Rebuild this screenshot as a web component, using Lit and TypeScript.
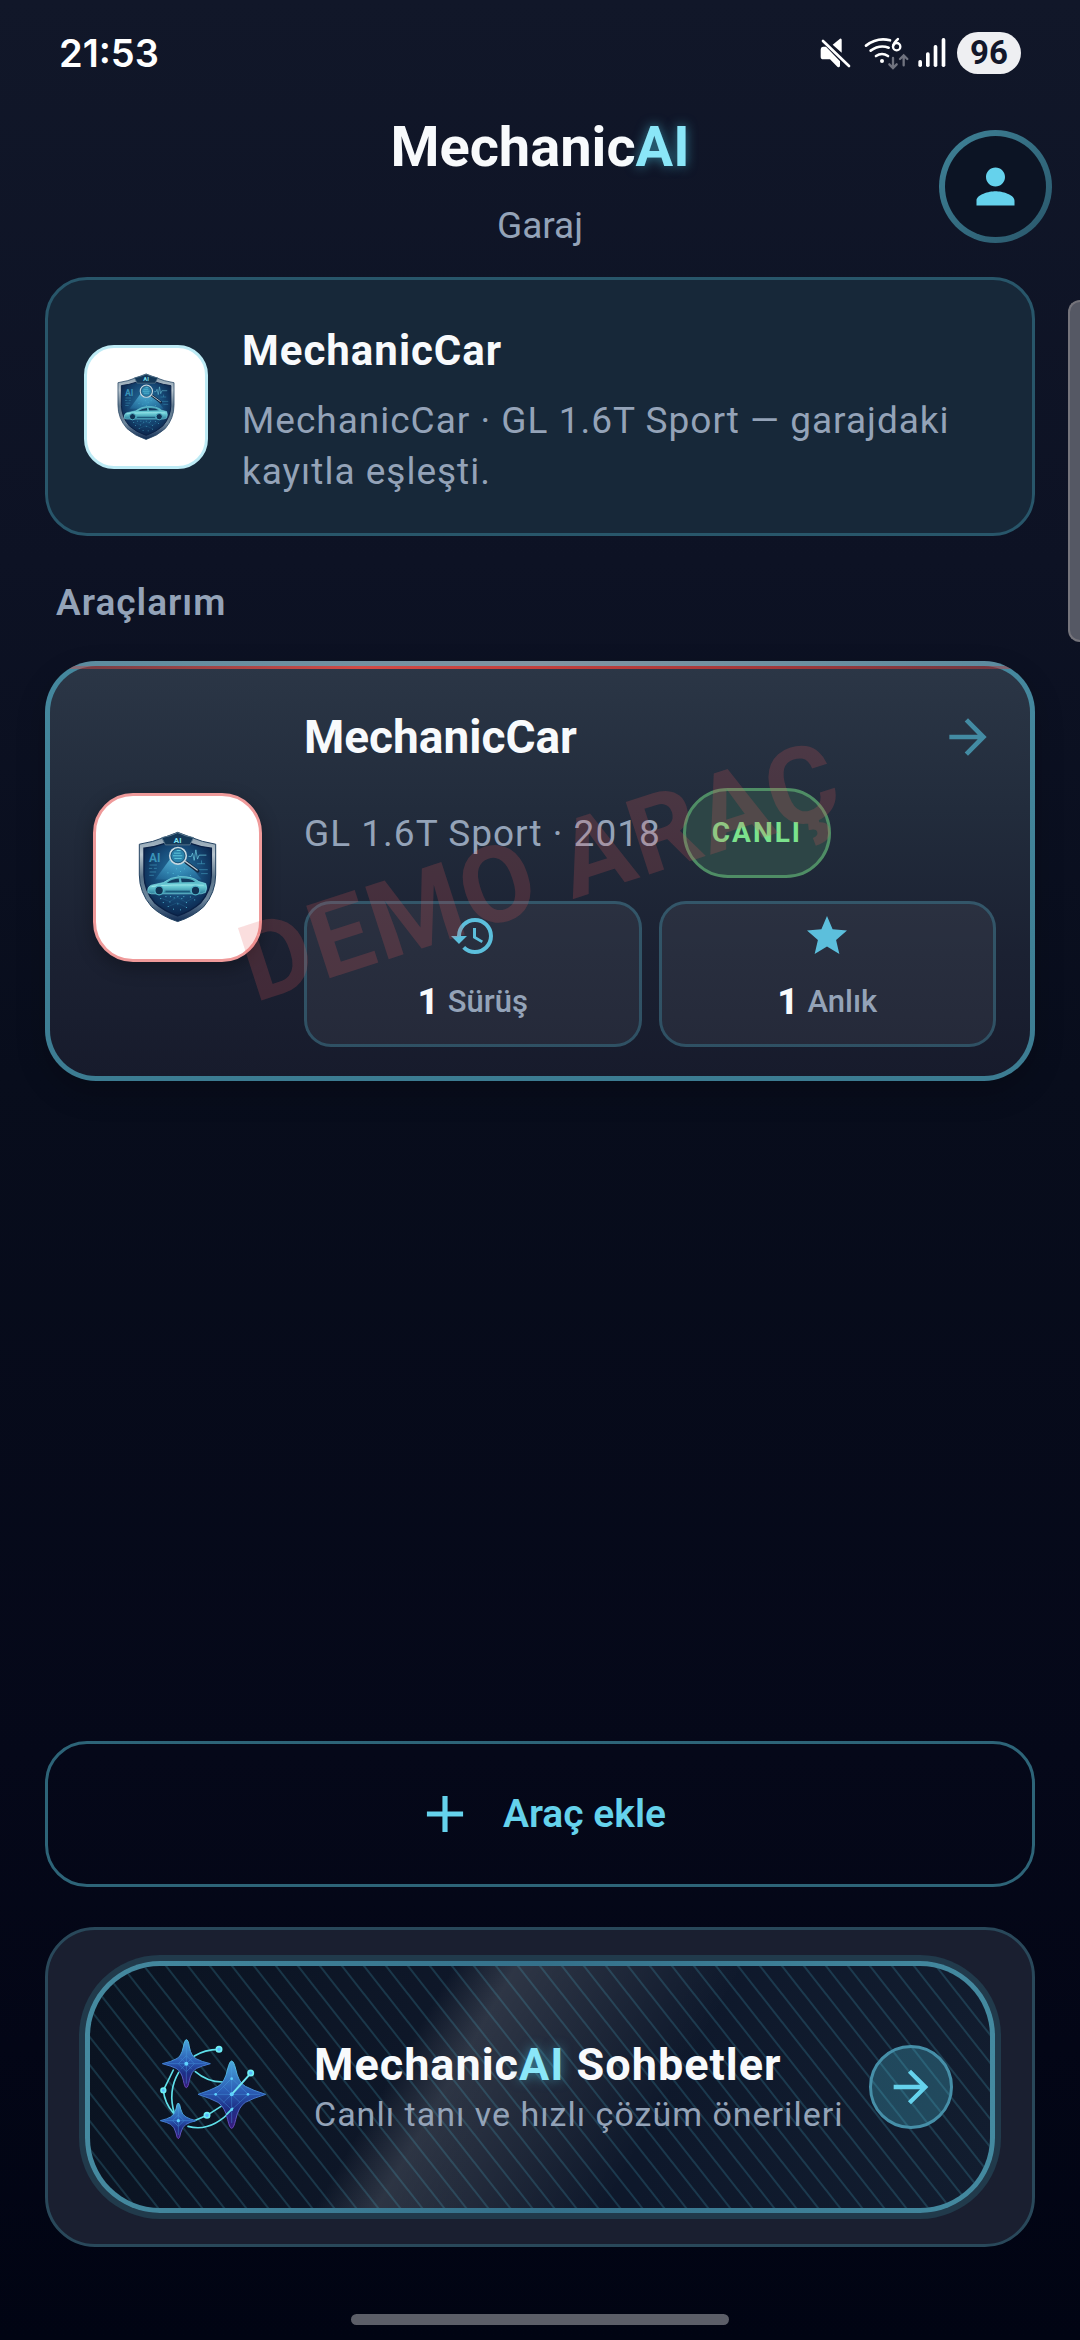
import { LitElement, html, css, svg } from "lit";
import { customElement, property } from "lit/decorators.js";

/* Shield emblem with a car, a magnifier and an "AI" crest. */
@customElement("shield-emblem")
class ShieldEmblem extends LitElement {
  static styles = css`
    :host { display: block; }
    .art { display: block; width: 100%; height: auto; }
    .crest { font: 700 24px Roboto, "Liberation Sans", sans-serif; fill: #7fe3f2; }
    .panel { font: 700 36px Roboto, "Liberation Sans", sans-serif; fill: #3a93b8; }
  `;

  render() {
    return html`
      <svg class="art" viewBox="173 149 239 279" aria-hidden="true">
        <defs>
          <linearGradient id="rim" x1="0" y1="0" x2="0" y2="1">
            <stop offset="0" stop-color="#7f95a6" />
            <stop offset=".25" stop-color="#b9c6cf" />
            <stop offset=".5" stop-color="#5a7389" />
            <stop offset=".75" stop-color="#6f889d" />
            <stop offset="1" stop-color="#0f2a52" />
          </linearGradient>
          <radialGradient id="field" cx=".5" cy=".4" r=".62">
            <stop offset="0" stop-color="#2878a2" />
            <stop offset=".5" stop-color="#184f7d" />
            <stop offset="1" stop-color="#0a2147" />
          </radialGradient>
          <linearGradient id="beam" x1="0" y1="0" x2="0" y2="1">
            <stop offset="0" stop-color="#6fd6f5" stop-opacity=".65" />
            <stop offset="1" stop-color="#3ba6d8" stop-opacity=".2" />
          </linearGradient>
          <linearGradient id="paint" x1="0" y1="0" x2="0" y2="1">
            <stop offset="0" stop-color="#3f9db5" />
            <stop offset=".55" stop-color="#6fd0d8" />
            <stop offset="1" stop-color="#2c7f9d" />
          </linearGradient>
        </defs>
        <path d="M293 153 L330 167 Q368 183 408 189 V282 Q408 335 372 378 Q340 408 293 423 Q246 408 214 378 Q177 335 177 282 V189 Q218 183 256 167 Z" fill="url(#rim)" stroke="#20405f" stroke-width="3" />
        <path d="M293 184 L334 187 Q364 198 395 201 V282 Q394 330 362 367 Q334 392 293 406 Q252 392 224 367 Q192 330 191 282 V201 Q222 198 252 187 Z" fill="url(#field)" stroke="#0a2045" stroke-width="4" />
        <path d="M245 169 Q270 165 293 154 Q316 165 341 169 L330 191 H256 Z" fill="#143858" stroke="#56748b" stroke-width="3" />
        <text class="crest" x="293" y="184" text-anchor="middle">AI</text>
        <text class="panel" x="206" y="243">AI</text>
        <path d="M270 234 L225 296 H365 L316 234 Z" fill="url(#beam)" />
        <g stroke="#3f97b8" stroke-width="2" fill="none">
          <path d="M326 226 h8 l4 -10 l5 22 l5 -32 l5 28 l5 -12 h22" stroke="#74d3e4" />
          <path d="M208 252 h22 M206 262 h10 m5 0 h9 M208 273 h20 M207 283 h14 M352 248 h24 M365 238 v10 M358 266 h26 M364 278 h20" />
        </g>
        <g fill="#4fb6d2">
          ${[
            [240, 352], [256, 346], [268, 362], [281, 350], [292, 368], [304, 352],
            [318, 364], [330, 347], [343, 356], [263, 376], [279, 384], [300, 386],
            [318, 379], [248, 364], [292, 346], [310, 346], [270, 346], [288, 262],
            [300, 270], [278, 276], [312, 262], [330, 282], [262, 274], [293, 282],
          ].map(([x, y]) => svg`<rect x=${x} y=${y} width="3" height="3"></rect>`)}
        </g>
        <path d="M242 352 L268 362 L292 350 L318 364 L343 350 M263 378 L292 366 L320 380" stroke="#2a7399" stroke-width="1" fill="none" />
        <path d="M203 336 Q200 318 213 313 L250 305 Q272 288 300 287 Q338 286 357 302 L378 308 Q384 322 377 335 L364 339 H214 Z" fill="url(#paint)" stroke="#86dfe6" stroke-width="2" />
        <path d="M260 306 Q276 294 296 293 L298 304 Z M303 293 Q332 292 346 303 L305 304 Z" fill="#123c60" />
        <path d="M214 317 Q260 310 372 313" stroke="#b5f1f3" stroke-width="2" fill="none" />
        <path d="M256 332 H330" stroke="#1c5b7d" stroke-width="5" />
        <g fill="#103354" stroke="#4fb0c4" stroke-width="4">
          <circle cx="237" cy="329" r="13" />
          <circle cx="347" cy="329" r="13" />
        </g>
        <path d="M318 243 L354 270" stroke="#12263f" stroke-width="10" stroke-linecap="round" />
        <path d="M316 241 L352 267" stroke="#b4c5d0" stroke-width="4" stroke-linecap="round" />
        <circle cx="294" cy="224" r="25" fill="#2a82ab" stroke="#c9d8e0" stroke-width="5" />
        <circle cx="294" cy="224" r="21" fill="none" stroke="#1c3f5e" stroke-width="2" />
        <path d="M282 216 h20 M279 224 h28 M283 232 h22 M290 208 h12" stroke="#5fc6dc" stroke-width="3" />
      </svg>
    `;
  }
}

/* One counter box of a vehicle card. */
@customElement("stat-box")
class StatBox extends LitElement {
  @property() icon = "";
  @property() value = "";
  @property() label = "";

  static styles = css`
    :host { display: block; }
    .box {
      box-sizing: border-box; width: 100%; display: flex; flex-direction: column;
      align-items: center; gap: 19px; padding: 8px 8px 19px; margin: 0;
      border: 3px solid rgba(79, 195, 222, 0.26); border-radius: 27px;
      background: rgba(255, 255, 255, 0.06); font-family: Roboto, "Liberation Sans", sans-serif;
    }
    .glyph { display: block; width: 48px; height: 48px; fill: #5cbfdc; }
    .line { display: flex; align-items: center; gap: 9px; line-height: 46px; }
    .value { font-size: 37px; font-weight: 800; color: #f8fafc; }
    .label { font-size: 31px; font-weight: 500; color: #94a3b8; }
  `;

  render() {
    return html`
      <button class="box" type="button">
        <svg class="glyph" viewBox="0 0 24 24" aria-hidden="true"><path d=${this.icon}></path></svg>
        <span class="line">
          <span class="value">${this.value}</span>
          <span class="label">${this.label}</span>
        </span>
      </button>
    `;
  }
}

const HISTORY =
  "M13 3a9 9 0 0 0-9 9H1l3.89 3.89.07.14L9 12H6c0-3.87 3.13-7 7-7s7 3.13 7 7-3.13 7-7 7c-1.93 0-3.68-.79-4.94-2.06l-1.42 1.42A8.95 8.95 0 0 0 13 21a9 9 0 0 0 0-18zm-1 5v5l4.28 2.54.72-1.21-3.5-2.08V8H12z";
const STAR =
  "M12 17.27 18.18 21l-1.64-7.03L22 9.24l-7.19-.61L12 2 9.19 8.63 2 9.24l5.46 4.73L5.82 21z";
const ARROW = "M12 4l-1.41 1.41L16.17 11H4v2h12.17l-5.58 5.59L12 20l8-8z";
const PERSON =
  "M12 12c2.21 0 4-1.79 4-4s-1.79-4-4-4-4 1.79-4 4 1.79 4 4 4zm0 2c-2.67 0-8 1.34-8 4v2h16v-2c0-2.66-5.33-4-8-4z";

@customElement("app-root")
class AppRoot extends LitElement {
  static styles = css`
    :host {
      display: flex; flex-direction: column; box-sizing: border-box; min-height: 100vh;
      position: relative; overflow: hidden; color: #f8fafc;
      background: linear-gradient(180deg, #111729 0%, #0d1224 24%, #080d1c 46%, #050819 75%, #010413 100%);
      font-family: Roboto, "Liberation Sans", sans-serif;
    }
    button { font-family: inherit; color: inherit; margin: 0; }

    .status { display: flex; align-items: center; justify-content: space-between; height: 106px; padding: 0 59px; }
    .clock { font: 600 38px/46px Inter, Roboto, sans-serif; color: #fff; }
    .tray { display: flex; align-items: center; gap: 11px; }
    .tray-icons { display: block; width: 128px; height: 42px; }
    .battery {
      display: flex; align-items: center; justify-content: center; width: 64px; height: 42px;
      border-radius: 21px; background: #eeeff2; color: #12172a; font: 700 33px/42px Roboto, sans-serif;
    }

    .header { display: grid; grid-template-columns: 1fr auto 1fr; align-items: center; padding: 0 28px; margin-bottom: 10px; }
    .heading { grid-column: 2; display: flex; flex-direction: column; align-items: center; gap: 24px; padding: 8px 0 19px; }
    .brand { margin: 0; font-size: 56px; line-height: 66px; font-weight: 700; }
    .accent { color: #8ae6f8; text-shadow: 0 0 12px rgba(79, 208, 235, 0.55); }
    .page { margin: 0; font-size: 37px; line-height: 44px; font-weight: 400; color: #94a3b8; }
    .avatar {
      justify-self: end; display: grid; place-items: center; width: 113px; height: 113px; padding: 0;
      border: 6px solid transparent; border-radius: 50%;
      background: linear-gradient(#0c1424, #0c1424) padding-box, linear-gradient(135deg, #3f8398, #29566a) border-box;
    }
    .avatar-icon { width: 57px; height: 57px; fill: #65d2ec; }

    .main { display: flex; flex-direction: column; flex: 1; padding: 0 45px; }

    .thumb { flex: none; box-sizing: border-box; display: grid; place-items: center; background: #fff; }
    .match {
      display: flex; align-items: center; gap: 34px; padding: 38px 36px;
      border: 3px solid #28566a; border-radius: 42px; background: #172839;
    }
    .match-thumb { width: 124px; height: 124px; border: 3px solid #bdebf5; border-radius: 30px; }
    .match-emblem { width: 58px; }
    .match-text { display: flex; flex-direction: column; gap: 13px; min-width: 0; padding-top: 2px; margin-bottom: -2px; }
    .match-title { margin: 0; font-size: 42px; line-height: 62px; font-weight: 700; letter-spacing: 1px; }
    .muted { margin: 0; color: #94a3b8; font-size: 37px; line-height: 51px; letter-spacing: 1px; }

    .section { margin: 45px 11px 36px; font-size: 37px; line-height: 44px; font-weight: 600; letter-spacing: 1px; color: #94a3b8; }

    .car {
      position: relative; display: flex; align-items: center; gap: 42px; padding: 41px 34px 29px 43px;
      border: 5px solid transparent; border-radius: 51px;
      background: linear-gradient(180deg, #2b3646 0%, #222c3c 35%, #1b2132 70%, #171b2c 100%) padding-box,
        linear-gradient(180deg, #45889e, #3c7c92) border-box;
      box-shadow: 0 12px 30px rgba(0, 0, 0, 0.2);
    }
    .car-edge { position: absolute; inset: -5px; border-radius: 51px; overflow: hidden; pointer-events: none; }
    .car-edge::before {
      content: ""; display: block; height: 5px;
      background: linear-gradient(90deg, rgba(170, 150, 160, 0.2), rgba(190, 160, 165, 0.5) 50%, rgba(170, 150, 160, 0.2));
    }
    .car-edge::after {
      content: ""; display: block; height: 3px;
      background: linear-gradient(90deg, rgba(229, 72, 66, 0.35), #d24a45 32%, #c23e3b 50%, rgba(180, 55, 55, 0.85) 75%, rgba(200, 60, 60, 0.4));
    }
    .car-thumb { width: 169px; height: 169px; border: 3px solid #ef9a9a; border-radius: 40px; box-shadow: 0 6px 18px rgba(0, 0, 0, 0.3); }
    .car-emblem { width: 79px; }
    .car-body { flex: 1; min-width: 0; display: flex; flex-direction: column; }
    .car-head { display: flex; align-items: center; justify-content: space-between; height: 60px; margin-bottom: 21px; }
    .car-name { margin: 0; font-size: 46px; line-height: 60px; font-weight: 700; }
    .open { display: block; padding: 0; border: 0; background: none; }
    .open-icon { display: block; width: 56px; height: 56px; fill: #438ba3; }
    .car-meta { display: flex; align-items: center; gap: 22px; margin-bottom: 23px; }
    .live {
      box-sizing: border-box; height: 90px; padding: 0 26px; border: 3px solid #4f8d65; border-radius: 45px;
      background: #2d4546; color: #7be28d; font-size: 28px; line-height: 84px; font-weight: 700; letter-spacing: 2px;
    }
    .stats { display: grid; grid-template-columns: 1fr 1fr; gap: 17px; }
    .watermark {
      position: absolute; inset: 0; display: grid; place-items: center; pointer-events: none;
      font-size: 107px; font-weight: 700; letter-spacing: 2px; white-space: nowrap; color: rgba(229, 90, 90, 0.2);
      transform: rotate(-18deg);
    }

    .add {
      display: flex; align-items: center; justify-content: center; gap: 27px; margin-top: auto; padding: 39px;
      border: 3px solid #2d6478; border-radius: 42px; background: none;
      color: #65d2ec; font-size: 39px; line-height: 62px; font-weight: 600;
    }
    .add-icon { width: 62px; height: 62px; fill: #65d2ec; }

    .dock { margin-top: 40px; padding: 31px 37px; border: 3px solid #29485a; border-radius: 50px; background: #1a1f30; }
    .chat {
      position: relative; width: 100%; display: flex; align-items: center; padding: 63px 37px 63px 65px; overflow: hidden;
      border: 5px solid transparent; border-radius: 75px; text-align: left;
      background: linear-gradient(120deg, transparent 35%, rgba(255, 255, 255, 0.13) 41%, transparent 63%) padding-box,
        linear-gradient(100deg, #0a1321, #0f182a 45%, #0e182b 62%, #121d2f) padding-box,
        linear-gradient(90deg, #458aa0, #34708a 50%, #448aa0) border-box;
      box-shadow: 0 0 0 6px #213a4b;
    }
    .hatch { position: absolute; inset: 0; width: 100%; height: 100%; }
    .spark { position: relative; flex: none; width: 116px; height: 116px; margin-right: 43px; }
    .chat-text { position: relative; flex: 1; min-width: 0; display: flex; flex-direction: column; }
    .chat-title { font-size: 45px; line-height: 54px; font-weight: 700; letter-spacing: 1px; }
    .chat-sub { font-size: 34px; line-height: 44px; color: #94a3b8; letter-spacing: 1px; white-space: nowrap; }
    .go {
      position: relative; flex: none; box-sizing: border-box; display: grid; place-items: center; width: 84px; height: 84px;
      border: 3px solid #468fa8; border-radius: 50%; background: rgba(79, 195, 222, 0.27);
    }
    .go-icon { width: 52px; height: 52px; fill: #65d2ec; }

    .home { width: 35%; height: 11px; margin: 67px auto 15px; border-radius: 6px; background: #5c5e68; }
    .edge-handle {
      position: absolute; right: 0; top: 300px; box-sizing: border-box; width: 12px; height: 342px;
      border: 2px solid #75747b; border-right: 0; border-radius: 12px 0 0 12px; background: #555864;
    }
  `;

  private statusIcons() {
    return html`
      <svg class="tray-icons" viewBox="0 0 384 126" role="img" aria-label="Sessiz, Wi-Fi 6, sinyal">
        <g fill="#fff">
          <path d="M8 54 Q8 44 16 44 H24 L66 88 V102 Q64 108 58 104 L36 82 H16 Q8 82 8 74 Z" />
          <path d="M44 38 L66 20 Q71 18 71 24 V62 Z" />
          <path d="M15 27 L93 102" stroke="#fff" stroke-width="8" stroke-linecap="round" />
        </g>
        <g stroke="#fff" stroke-width="8" fill="none" stroke-linecap="round">
          <path d="M144 41 Q178 15 216 25" />
          <path d="M158 56 Q184 37 212 47" />
          <path d="M174 72 Q192 60 210 72" />
        </g>
        <circle cx="192" cy="87" r="6" fill="#fff" />
        <path d="M240 21 Q227 32 225 43" stroke="#fff" stroke-width="7" fill="none" stroke-linecap="round" />
        <circle cx="236" cy="44" r="11" fill="none" stroke="#fff" stroke-width="7" />
        <path d="M225 78 V106 M214 97 L225 108 L236 97 M257 100 V72 M246 81 L257 70 L268 81" stroke="#70737f" stroke-width="7" fill="none" stroke-linecap="round" />
        <g fill="#fff">
          <rect x="301" y="84" width="11" height="21" rx="5" />
          <rect x="324" y="61" width="11" height="44" rx="5" />
          <rect x="347" y="39" width="11" height="66" rx="5" />
          <rect x="371" y="18" width="11" height="87" rx="5" />
        </g>
      </svg>
    `;
  }

  private sparkIcon() {
    return html`
      <svg class="spark" viewBox="47 28 348 348" aria-hidden="true">
        <defs>
          <linearGradient id="star" x1="0" y1="0" x2="0" y2="1">
            <stop offset="0" stop-color="#4aa6dc" />
            <stop offset=".45" stop-color="#2b5cb4" />
            <stop offset=".7" stop-color="#1e2f86" />
            <stop offset="1" stop-color="#361d7e" />
          </linearGradient>
          <linearGradient id="outline" x1="0" y1="0" x2="0" y2="1">
            <stop offset="0" stop-color="#55c8e8" />
            <stop offset=".5" stop-color="#3f7fd0" />
            <stop offset="1" stop-color="#6a3fb8" />
          </linearGradient>
        </defs>
        <g fill="none" stroke="#5fe0ea" stroke-width="5" stroke-linecap="round">
          <path d="M165 109 Q195 90 239 89" />
          <path d="M102 151 L72 212 Q76 250 102 280" />
          <path d="M118 158 Q84 215 106 284" />
          <path d="M168 156 Q205 188 252 187" />
          <path d="M163 304 L203 287 L245 260" />
          <path d="M146 320 Q215 340 280 268" />
        </g>
        <g fill="url(#star)" stroke="url(#outline)" stroke-width="3" stroke-linejoin="round">
          <path d="M141 60 Q147 60 150 82 Q156 112 172 118 Q186 126 213 132 Q186 139 172 146 Q156 154 150 182 Q146 204 141 204 Q136 204 132 182 Q126 154 110 146 Q96 139 69 132 Q96 126 110 118 Q126 112 132 82 Q136 60 141 60 Z" />
          <path d="M277 124 Q283 124 289 148 Q297 188 318 200 Q340 212 379 224 Q340 236 318 248 Q297 262 289 300 Q283 326 277 326 Q271 326 265 300 Q257 262 236 248 Q214 236 176 224 Q214 212 236 200 Q257 188 265 148 Q271 124 277 124 Z" />
          <path d="M117 250 Q121 250 124 268 Q128 286 140 292 Q150 298 170 303 Q150 308 140 314 Q128 322 124 340 Q121 357 117 357 Q113 357 110 340 Q106 322 94 314 Q84 308 63 303 Q84 298 94 292 Q106 286 110 268 Q113 250 117 250 Z" />
        </g>
        <g fill="none" stroke="#4aa0e6" stroke-width="2" opacity=".6">
          <path d="M141 72 V192 M82 132 H200 M141 108 L165 132 L141 156 L117 132 Z M124 115 L158 149 M158 115 L124 149" />
          <path d="M277 140 V310 M192 224 H362 M277 176 L327 224 L277 270 L229 224 Z M252 200 L302 248 M302 200 L252 248" />
          <path d="M117 262 V346 M75 303 H160 M117 286 L134 303 L117 320 L100 303 Z" />
        </g>
        <path d="M277 224 L334 161" stroke="#6fe6f2" stroke-width="6" stroke-linecap="round" />
        <path d="M262 284 L280 266" stroke="#5fe0ea" stroke-width="5" stroke-linecap="round" />
        <g fill="#59b8ff" stroke="#6ff0f4" stroke-width="5">
          <circle cx="239" cy="89" r="8" />
          <circle cx="72" cy="212" r="7" />
          <circle cx="334" cy="160" r="8" />
          <circle cx="203" cy="287" r="8" />
        </g>
        <g fill="#5fd2ff">
          <circle cx="141" cy="132" r="6" />
          <circle cx="277" cy="224" r="6" />
          <circle cx="117" cy="303" r="5" />
          <circle cx="277" cy="177" r="4" />
          <circle cx="229" cy="224" r="4" />
          <circle cx="326" cy="224" r="4" />
          <circle cx="277" cy="270" r="4" />
        </g>
      </svg>
    `;
  }

  render() {
    return html`
      <div class="status">
        <time class="clock">21:53</time>
        <div class="tray">${this.statusIcons()}<span class="battery">96</span></div>
      </div>

      <header class="header">
        <div class="heading">
          <h1 class="brand">Mechanic<span class="accent">AI</span></h1>
          <p class="page">Garaj</p>
        </div>
        <button class="avatar" type="button" aria-label="Profil">
          <svg class="avatar-icon" viewBox="0 0 24 24" aria-hidden="true"><path d=${PERSON}></path></svg>
        </button>
      </header>

      <main class="main">
        <section class="match">
          <div class="thumb match-thumb"><shield-emblem class="match-emblem"></shield-emblem></div>
          <div class="match-text">
            <h2 class="match-title">MechanicCar</h2>
            <p class="muted">MechanicCar · GL 1.6T Sport — garajdaki kayıtla eşleşti.</p>
          </div>
        </section>

        <h2 class="section">Araçlarım</h2>

        <article class="car">
          <div class="car-edge"></div>
          <div class="thumb car-thumb"><shield-emblem class="car-emblem"></shield-emblem></div>
          <div class="car-body">
            <div class="car-head">
              <h3 class="car-name">MechanicCar</h3>
              <button class="open" type="button" aria-label="Aracı aç">
                <svg class="open-icon" viewBox="0 0 24 24" aria-hidden="true"><path d=${ARROW}></path></svg>
              </button>
            </div>
            <div class="car-meta">
              <p class="muted">GL 1.6T Sport · 2018</p>
              <span class="live">CANLI</span>
            </div>
            <div class="stats">
              <stat-box .icon=${HISTORY} value="1" label="Sürüş"></stat-box>
              <stat-box .icon=${STAR} value="1" label="Anlık"></stat-box>
            </div>
          </div>
          <div class="watermark">DEMO ARAÇ</div>
        </article>

        <button class="add" type="button">
          <svg class="add-icon" viewBox="0 0 24 24" aria-hidden="true"><path d="M19 13h-6v6h-2v-6H5v-2h6V5h2v6h6z"></path></svg>
          <span>Araç ekle</span>
        </button>

        <div class="dock">
          <button class="chat" type="button">
            <svg class="hatch" aria-hidden="true">
              <defs>
                <pattern id="lines" x="10" y="0" width="22" height="28" patternUnits="userSpaceOnUse">
                  <path d="M-22 -28 L44 56 M-22 0 L22 56 M0 -28 L44 28" stroke="#4fc3de" stroke-opacity=".19" stroke-width="2" />
                </pattern>
              </defs>
              <rect width="100%" height="100%" fill="url(#lines)" />
            </svg>
            ${this.sparkIcon()}
            <span class="chat-text">
              <span class="chat-title">Mechanic<span class="accent">AI</span> Sohbetler</span>
              <span class="chat-sub">Canlı tanı ve hızlı çözüm önerileri</span>
            </span>
            <span class="go">
              <svg class="go-icon" viewBox="0 0 24 24" aria-hidden="true"><path d=${ARROW}></path></svg>
            </span>
          </button>
        </div>
      </main>

      <div class="home"></div>
      <div class="edge-handle"></div>
    `;
  }
}
